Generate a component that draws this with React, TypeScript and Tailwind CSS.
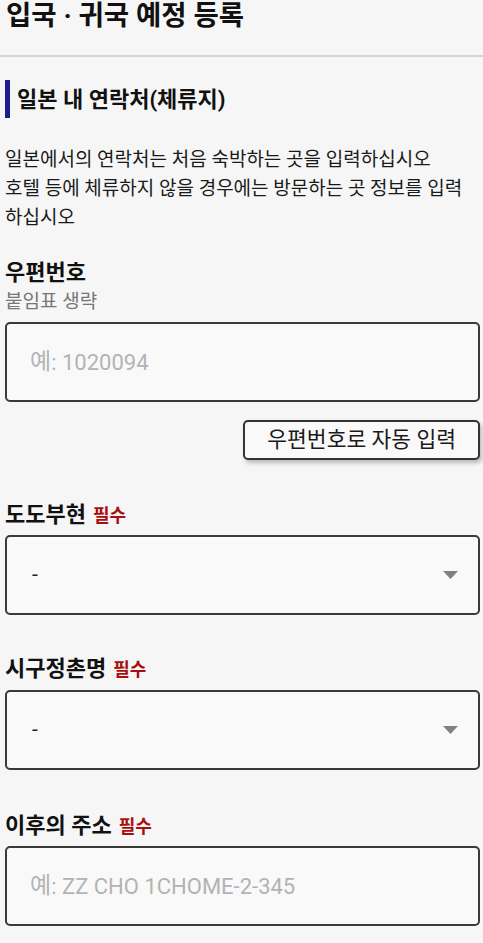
import React from "react";

const font = { fontFamily: 'Roboto, "Noto Sans CJK KR", sans-serif' };

function Label({ text, required }: { text: string; required?: boolean }) {
  return (
    <div className="flex h-[26px] items-baseline gap-[7px] leading-[26px]">
      <span className="text-[22px] font-bold text-[#111]">{text}</span>
      {required && <span className="text-[18px] font-bold text-[#a80f0f]">필수</span>}
    </div>
  );
}

function TextBox({ placeholder, className = "" }: { placeholder: string; className?: string }) {
  return (
    <div
      className={`flex h-[80px] items-center rounded-[5px] border-2 border-[#3a3a3a] bg-[#f9f9f9] pl-[23px] text-[22px] text-[#b3b3b3] ${className}`}
    >
      <span className="text-[23px]">예</span>
      {placeholder}
    </div>
  );
}

function SelectBox({ className = "" }: { className?: string }) {
  return (
    <div
      className={`flex h-[80px] items-center justify-between rounded-[5px] border-2 border-[#3a3a3a] bg-[#f9f9f9] pl-[25px] pr-[20px] text-[21px] ${className}`}
    >
      <span className="text-[#222]">-</span>
      <svg width="15" height="8" viewBox="0 0 15 8">
        <path d="M0 0h15L7.5 8z" fill="#808080" />
      </svg>
    </div>
  );
}

export default function App() {
  return (
    <div className="min-h-[943px] bg-[#f6f6f6] pl-[5px] pr-[3px]" style={font}>
      <div className="-ml-[5px] -mr-[3px] h-[57px] border-b-2 border-[#d4d4d4] pl-[6px]">
        <h1 className="text-[27.5px] font-bold leading-[32px] text-[#111]">입국 · 귀국 예정 등록</h1>
      </div>

      <div className="mt-[23px] flex items-center gap-[7px]">
        <div className="h-[38px] w-[5px] bg-[#1c1c8e]" />
        <h2 className="text-[22px] font-bold text-[#111]">일본 내 연락처(체류지)</h2>
      </div>

      <p className="mt-[27px] whitespace-nowrap text-[19px] leading-[29px] text-[#1a1a1a]">
        일본에서의 연락처는 처음 숙박하는 곳을 입력하십시오
        <br />
        호텔 등에 체류하지 않을 경우에는 방문하는 곳 정보를 입력
        <br />
        하십시오
      </p>

      <div className="mt-[28px]">
        <Label text="우편번호" />
        <div className="mt-[4px] text-[19px] leading-[24px] text-[#777]">붙임표 생략</div>
        <TextBox placeholder=": 1020094" className="mt-[8px]" />
      </div>

      <div className="mt-[18px] flex justify-end">
        <button className="h-[40px] rounded-[5px] border-2 border-[#333] bg-[#f9f9f9] px-[22px] text-[21.5px] leading-none text-[#1a1a1a] shadow-[2px_3px_4px_rgba(0,0,0,0.25)]">
          우편번호로 자동 입력
        </button>
      </div>

      <div className="mt-[42px]">
        <Label text="도도부현" required />
        <SelectBox className="mt-[7px]" />
      </div>

      <div className="mt-[41px]">
        <Label text="시구정촌명" required />
        <SelectBox className="mt-[8px]" />
      </div>

      <div className="mt-[43px]">
        <Label text="이후의 주소" required />
        <TextBox placeholder=": ZZ CHO 1CHOME-2-345" className="mt-[7px]" />
      </div>
    </div>
  );
}
